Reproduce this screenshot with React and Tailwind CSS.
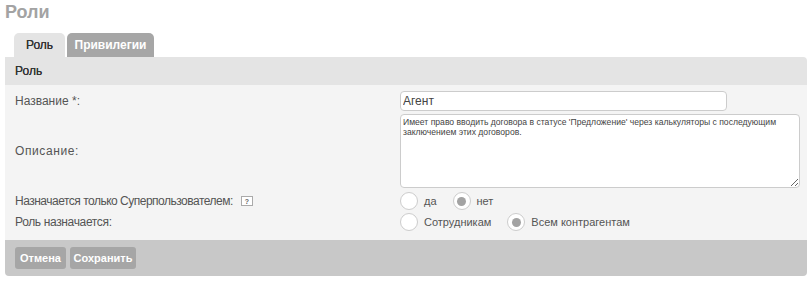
import React from "react";

function Radio({ checked, label }) {
  return (
    <label className="flex items-center">
      <span className="flex h-[18px] w-[18px] items-center justify-center rounded-full border border-[#cccccc] bg-white">
        {checked && <span className="h-[9px] w-[9px] rounded-full bg-[#a3a3a3]" />}
      </span>
      <span className="ml-[6px] text-[11px] text-[#555555]">{label}</span>
    </label>
  );
}

export default function App() {
  return (
    <div className="min-h-[282px] bg-white px-[5px] pt-[2px] text-[12px] text-[#555555]" style={{ fontFamily: '"Liberation Sans", Arial, sans-serif' }}>
      <h1 className="text-[18px] font-bold leading-[21px] text-[#a3a3a3]">Роли</h1>
      <div className="mt-[10px] flex gap-[2px] pl-[9px]">
        <div className="flex h-[24px] w-[51px] items-center justify-center rounded-t-[5px] bg-[#e4e4e4] text-[12px] text-[#333333] [text-shadow:0_0_0.2px_#333]">Роль</div>
        <div className="flex h-[24px] w-[87px] items-center justify-center rounded-t-[5px] bg-[#a6a6a6] text-[12px] font-bold text-white">Привилегии</div>
      </div>
      <div className="w-[802px] overflow-hidden rounded-b-[4px] rounded-tr-[4px]">
        <div className="flex h-[28px] items-center bg-[#e4e4e4] pl-[10px] text-[12px] text-[#333333] [text-shadow:0_0_0.2px_#333]">Роль</div>
        <div className="grid grid-cols-[385px_1fr] items-center gap-y-[3px] bg-[#f4f4f4] pb-[9px] pl-[10px] pr-[7px] pt-[6px]">
          <div>Название *:</div>
          <div>
            <input
              className="h-[20px] w-[327px] rounded-[4px] border border-[#cccccc] bg-white px-[2px] text-[12px] text-[#444444] outline-none"
              defaultValue="Агент"
            />
          </div>
          <div className="tracking-[0.6px]">Описание:</div>
          <div>
            <textarea
              className="block h-[74px] w-[400px] rounded-[4px] border border-[#cccccc] bg-white px-[2px] py-[2px] text-[8.6px] leading-[10px] text-[#444444] outline-none"
              defaultValue="Имеет право вводить договора в статусе 'Предложение' через калькуляторы с последующим заключением этих договоров."
            />
          </div>
          <div className="mt-[1px] flex items-center">
            <span className="tracking-[-0.5px]">Назначается только Суперпользователем:</span>
            <span className="ml-[8px] flex h-[10px] w-[12px] items-center justify-center border border-[#aaaaaa] bg-white text-[7px] font-bold leading-none text-[#666666]">?</span>
          </div>
          <div className="mt-[1px] flex items-center gap-[16px]">
            <Radio label="да" />
            <Radio checked label="нет" />
          </div>
          <div className="tracking-[-0.35px]">Роль назначается:</div>
          <div className="flex items-center gap-[16px]">
            <Radio label="Сотрудникам" />
            <Radio checked label="Всем контрагентам" />
          </div>
        </div>
        <div className="flex h-[36px] items-center gap-[4px] bg-[#c8c8c8] pl-[10px]">
          <button className="h-[22px] w-[51px] rounded-[3px] bg-[#a6a6a6] text-[11px] font-bold text-white">Отмена</button>
          <button className="h-[22px] w-[66px] rounded-[3px] bg-[#a6a6a6] text-[11px] font-bold text-white">Сохранить</button>
        </div>
      </div>
    </div>
  );
}
